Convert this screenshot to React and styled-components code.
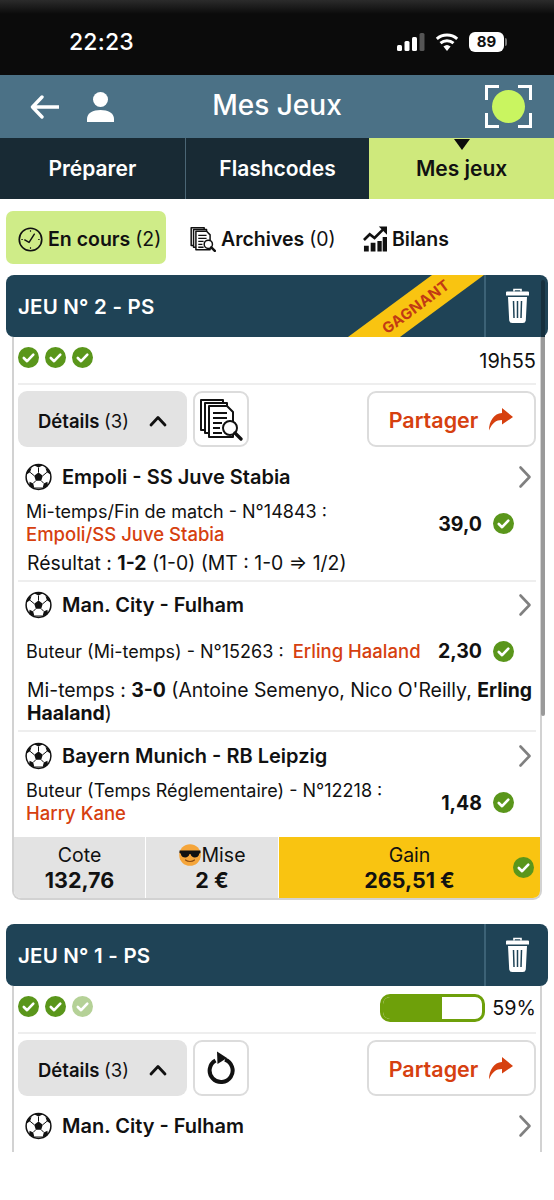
import React from 'react';
import styled, { createGlobalStyle } from 'styled-components';

const GlobalStyle = createGlobalStyle`
  html, body {
    margin: 0;
    padding: 0;
    background: #fff;
  }
  body {
    font-family: Inter, "Noto Sans", "Liberation Sans", sans-serif;
    color: #111;
  }
  * {
    box-sizing: border-box;
  }
`;

const Screen = styled.div`
  width: 554px;
  height: 1152px;
  overflow: hidden;
  position: relative;
  background: #fff;
`;

const StatusBar = styled.div`
  height: 75px;
  background: linear-gradient(#2b2b2b 0, #0b0b0b 14px);
  color: #fff;
  display: flex;
  align-items: center;
  justify-content: space-between;
  padding: 8px 50px 0 69px;
`;

const Clock = styled.span`
  font-size: 23px;
  font-weight: 500;
  letter-spacing: 0.2px;
`;

const StatusIcons = styled.div`
  display: flex;
  align-items: center;
  gap: 10px;
`;

const Battery = styled.div`
  width: 35px;
  height: 20px;
  border-radius: 6px;
  background: #fff;
  color: #111;
  font-size: 15px;
  font-weight: 700;
  display: flex;
  align-items: center;
  justify-content: center;
  position: relative;
  &::after {
    content: '';
    position: absolute;
    right: -3px;
    top: 6px;
    width: 2px;
    height: 8px;
    border-radius: 0 2px 2px 0;
    background: #777;
  }
`;

const Header = styled.header`
  height: 63px;
  background: #4b7186;
  display: grid;
  grid-template-columns: 1fr auto 1fr;
  align-items: center;
  padding: 0 22px;
  color: #fff;
`;

const HeaderLeft = styled.div`
  display: flex;
  align-items: center;
  gap: 28px;
  padding-left: 8px;
`;

const HeaderTitle = styled.h1`
  margin: 0 0 4px;
  font-size: 28px;
  font-weight: 500;
`;

const HeaderRight = styled.div`
  display: flex;
  justify-content: flex-end;
`;

const Tabs = styled.nav`
  height: 61px;
  display: grid;
  grid-template-columns: repeat(3, 1fr);
`;

const Tab = styled.div`
  position: relative;
  display: flex;
  align-items: center;
  justify-content: center;
  font-size: 21px;
  font-weight: 600;
  background: ${(p) => (p.$active ? '#cfe97c' : '#182a34')};
  color: ${(p) => (p.$active ? '#111' : '#fff')};
  border-left: ${(p) => (p.$divider ? '1px solid #4b6675' : 'none')};
  ${(p) =>
    p.$active &&
    `&::before {
      content: '';
      position: absolute;
      top: 1px;
      left: 50%;
      margin-left: -8px;
      border-left: 8px solid transparent;
      border-right: 8px solid transparent;
      border-top: 11px solid #0c0c0c;
    }`}
`;

const Filters = styled.div`
  display: flex;
  align-items: center;
  padding: 12px 6px 11px;
  height: 76px;
`;

const Filter = styled.div`
  height: 53px;
  display: flex;
  align-items: center;
  gap: 5px;
  font-size: 19.5px;
  font-weight: 600;
  white-space: nowrap;
  border-radius: 7px;
  padding-top: 3px;
  padding-left: ${(p) => p.$pad}px;
  width: ${(p) => p.$width}px;
  background: ${(p) => (p.$active ? '#cfec88' : 'transparent')};
`;

const Light = styled.span`
  font-weight: 400;
`;

const Card = styled.section`
  margin: 0 6px 24px;
`;

const CardHead = styled.div`
  position: relative;
  height: 62px;
  background: #1f4356;
  border-radius: 8px;
  color: #fff;
  display: flex;
  align-items: center;
  overflow: hidden;
`;

const CardTitle = styled.div`
  flex: 1;
  padding-left: 12px;
  font-size: 20.5px;
  font-weight: 600;
  letter-spacing: 0.2px;
`;

const TrashCell = styled.div`
  width: 64px;
  height: 100%;
  border-left: 2px solid #3c6276;
  display: flex;
  align-items: center;
  justify-content: center;
`;

const Ribbon = styled.div`
  position: absolute;
  left: 342px;
  top: 0;
  width: 136px;
  height: 62px;
  background: #f9c411;
  clip-path: polygon(0 100%, 84px 0, 136px 0, 52px 100%);
  display: flex;
  align-items: center;
  justify-content: center;
`;

const RibbonText = styled.span`
  color: #c23a14;
  font-size: 15px;
  font-weight: 700;
  letter-spacing: 0.4px;
  transform: rotate(-36.5deg);
`;

const Scrollbar = styled.div`
  position: absolute;
  left: 541px;
  top: 280px;
  width: 4px;
  height: 436px;
  border-radius: 2px;
  background: linear-gradient(#16303e 0, #16303e 57px, #9a9a9a 57px);
`;

const CardBody = styled.div`
  margin: 0 6px;
  padding: 0 4px ${(p) => (p.$cut ? '40px' : '0')};
  border: 2px solid #d2d2d2;
  border-top: none;
  border-radius: 0 0 9px 9px;
  overflow: hidden;
`;

const StatusRow = styled.div`
  height: 48px;
  display: flex;
  justify-content: space-between;
  align-items: center;
  border-bottom: 2px solid #eeeeee;
  padding-bottom: 2px;
`;

const Checks = styled.div`
  display: flex;
  gap: 6px;
  margin-top: -4px;
`;

const Time = styled.span`
  font-size: 20px;
  margin-top: 3px;
`;

const Progress = styled.div`
  display: flex;
  align-items: center;
  gap: 7px;
  font-size: 19.8px;
`;

const Track = styled.div`
  width: 105px;
  height: 28px;
  border: 3px solid #6ea00a;
  border-radius: 10px;
  background: #fff;
  overflow: hidden;
`;

const Fill = styled.div`
  height: 100%;
  background: #6ea00a;
`;

const Actions = styled.div`
  display: flex;
  gap: 6px;
  margin-top: 6px;
  height: 56px;
`;

const DetailsBtn = styled.div`
  width: 169px;
  background: #e3e3e3;
  border-radius: 9px;
  display: flex;
  align-items: center;
  justify-content: space-between;
  padding: 3px 20px 0;
  font-size: 18.5px;
  font-weight: 600;
`;

const IconBtn = styled.div`
  width: 56px;
  border: 2px solid #dcdcdc;
  border-radius: 9px;
  display: flex;
  align-items: center;
  justify-content: center;
`;

const ShareBtn = styled.div`
  margin-left: auto;
  width: 169px;
  border: 2px solid #dcdcdc;
  border-radius: 9px;
  display: flex;
  align-items: center;
  justify-content: center;
  gap: 10px;
  padding-top: 2px;
  color: #d6400f;
  font-size: 21.5px;
  font-weight: 600;
`;

const Match = styled.div`
  padding: ${(p) => (p.$first ? '16px' : p.$last ? '10px' : '9px')} 0 5px;
  border-bottom: ${(p) => (p.$last ? 'none' : '2px solid #eeeeee')};
`;

const MatchTitle = styled.div`
  height: 28px;
  display: flex;
  align-items: center;
  gap: 10px;
  padding-left: 7px;
  font-size: 20px;
  font-weight: 600;
`;

const Arrow = styled.svg`
  margin-left: auto;
  margin-right: 4px;
`;

const Bet = styled.div`
  min-height: 44px;
  margin-top: 10px;
  padding-left: 8px;
  display: flex;
  align-items: center;
  justify-content: space-between;
`;

const BetText = styled.div`
  font-size: 18px;
  line-height: 22px;
`;

const Pick = styled.span`
  color: #d6400f;
  font-size: 18.5px;
  font-weight: 500;
  margin-left: ${(p) => (p.$inline ? '4px' : '0')};
`;

const Odds = styled.div`
  display: flex;
  align-items: center;
  justify-content: flex-end;
  gap: 11px;
  padding-right: 22px;
  font-size: 19.5px;
  font-weight: 700;
  flex-shrink: 0;
`;

const Result = styled.div`
  margin-top: 6px;
  padding-left: 9px;
  font-size: 19.4px;
  line-height: 23px;
`;

const Strong = styled.strong`
  font-weight: 700;
`;

const Totals = styled.div`
  margin: 7px -4px 0;
  height: 61px;
  display: grid;
  grid-template-columns: 131px 132px 1fr;
  gap: 1px;
`;

const Total = styled.div`
  position: relative;
  display: flex;
  flex-direction: column;
  align-items: center;
  justify-content: center;
  background: ${(p) => (p.$gain ? '#f9c411' : '#e3e3e3')};
  font-size: 19.5px;
  line-height: 25px;
`;

const TotalLabel = styled.div`
  display: flex;
  align-items: center;
  gap: 1px;
`;

const TotalValue = styled.div`
  font-size: 21.5px;
  font-weight: 700;
`;

const GainCheck = styled.div`
  position: absolute;
  right: 6px;
  top: 20px;
  display: flex;
`;

const CheckIcon = ({ faded }) => (
  <svg width="21" height="21" viewBox="0 0 21 21" style={{ display: 'block', flexShrink: 0 }}>
    <circle cx="10.5" cy="10.5" r="10.5" fill={faded ? '#b5d197' : '#5a961b'} />
    <path d="M5.8 11l3.3 3.2 6.2-6.6" fill="none" stroke="#fff" strokeWidth="2.6" strokeLinecap="round" strokeLinejoin="round" />
  </svg>
);

const BallIcon = () => (
  <svg width="27" height="28" viewBox="0 0 27 28" style={{ flexShrink: 0 }}>
    <circle cx="13.5" cy="14" r="12.4" fill="#fff" stroke="#111" strokeWidth="1.5" />
    <path d="M13.5 9.6l4.3 3.1-1.6 5h-5.4l-1.6-5z" fill="#111" />
    <path d="M9.4 2.4l4.1 2.2 4.1-2.2-.6-.6h-7zM1.5 11.5l3.6-2.2 1.4-4.4-2.2 1.2-2.7 3.600zM25.500 11.500l-3.600-2.200-1.400-4.400 2.200 1.200 2.700 3.600zM4 23l.6-4.200 3.600 1.600 1.200 4.600-3-.6zM23 23l-.6-4.200-3.600 1.600-1.200 4.600 3-.6z" fill="#111" />
    <path d="M13.500 4.600v5M5.100 9.300l4.100 3.400M21.900 9.300l-4.100 3.400M8.200 20.400l2.600-2.700M18.800 20.400l-2.600-2.700M9.400 25h8.200" stroke="#111" strokeWidth="1" fill="none" />
  </svg>
);

const TrashIcon = () => (
  <svg width="23" height="36" viewBox="0 0 23 36">
    <path d="M8 3.500V1.500h7v2" fill="none" stroke="#fff" strokeWidth="1.600" />
    <path d="M1 3.500h21a1 1 0 0 1 1 1v3H0v-3a1 1 0 0 1 1-1z" fill="#fff" />
    <path d="M2 9h19l-1.200 23.500a3 3 0 0 1-3 2.500H6.200a3 3 0 0 1-3-2.500z" fill="#fff" />
    <path d="M7.500 13l.5 17M11.500 13v17M15.500 13l-.5 17" stroke="#1f4356" strokeWidth="1.500" fill="none" />
  </svg>
);

const DocSearchIcon = ({ size = 24, stroke = 1.4 }) => (
  <svg width={size} height={size} viewBox="0 0 44 44">
    <g fill="#fff" stroke="#111" strokeWidth={stroke * 1.8} strokeLinejoin="round">
      <path d="M2 3h22v30H2z" />
      <path d="M6 6h22v30H6z" />
      <path d="M10 9h18l6 6v25H10z" />
    </g>
    <path d="M14 16h14M14 21h14M14 26h9M14 31h7M14 36h9" stroke="#111" strokeWidth={stroke * 1.6} />
    <circle cx="31" cy="31" r="7" fill="#fff" stroke="#111" strokeWidth={stroke * 1.8} />
    <path d="M36 36l6 6" stroke="#111" strokeWidth={stroke * 3} strokeLinecap="round" />
  </svg>
);

const ClockIcon = () => (
  <svg width="25" height="25" viewBox="0 0 26 26" fill="none" stroke="#111">
    <circle cx="13" cy="13" r="11.700" strokeWidth="1.700" />
    <path d="M7 13.500l4.500 2.500 5.500-8.500" strokeWidth="1.500" strokeLinecap="round" strokeLinejoin="round" />
    <path d="M13 3.500v1.500M13 21v1.500M3.500 13H5M21 13h1.500" strokeWidth="1.200" />
  </svg>
);

const ChartIcon = () => (
  <svg width="24" height="27" viewBox="0 0 25 27">
    <path d="M1 26v-6h5v6zM8 26v-9h5v9zM15 26v-11h4.500v11zM20.500 26V11H25v15z" fill="#111" />
    <path d="M1 14l6-6 5 4 9-9" fill="none" stroke="#111" strokeWidth="2.800" />
    <path d="M16.500 0H25v8.500z" fill="#111" />
  </svg>
);

const ChevronRight = () => (
  <Arrow width="14" height="24" viewBox="0 0 14 24">
    <path d="M2.500 2.500L11.500 12l-9 9.500" fill="none" stroke="#808080" strokeWidth="2.600" strokeLinecap="round" strokeLinejoin="round" />
  </Arrow>
);

const ChevronUp = () => (
  <svg width="18" height="12" viewBox="0 0 18 12">
    <path d="M2 10l7-7.500 7 7.500" fill="none" stroke="#111" strokeWidth="2.800" strokeLinecap="round" strokeLinejoin="round" />
  </svg>
);

const RefreshIcon = () => (
  <svg width="28" height="34" viewBox="0 0 28 34">
    <path d="M8.500 9.500a11.500 11.500 0 1 0 9.500-.8" fill="none" stroke="#111" strokeWidth="4" />
    <path d="M10 0.500L20 7l-9.500 6z" fill="#111" />
  </svg>
);

const ShareIcon = () => (
  <svg width="26" height="24" viewBox="0 0 26 24">
    <path d="M14 0l11 9-11 7.500V12c-6 0-10 3-13 10.500C1 13 6 5.500 14 5z" fill="#d6400f" />
  </svg>
);

const CoolEmoji = () => (
  <svg width="22" height="22" viewBox="0 0 22 22">
    <circle cx="11" cy="11" r="10.800" fill="#f5a53a" />
    <path d="M0.500 6.500h21v2.500l-1.200 0.500c-.5 3-2.500 4-4.500 4s-3.800-1.500-4.300-3.500h-1c-.5 2-2.300 3.500-4.300 3.500s-4-1-4.500-4L0.500 9z" fill="#111" />
    <path d="M6.500 16c2.500 2 6.500 2 9 0" fill="none" stroke="#8a4a10" strokeWidth="1.200" strokeLinecap="round" />
  </svg>
);

const MatchBlock = ({ name, first, last, desc, pick, odds, inline, children }) => (
  <Match $first={first} $last={last}>
    <MatchTitle>
      <BallIcon />
      {name}
      <ChevronRight />
    </MatchTitle>
    {desc && (
      <Bet>
        <BetText>
          {desc} {!inline && <br />}
          <Pick $inline={inline}>{pick}</Pick>
        </BetText>
        <Odds>
          {odds}
          <CheckIcon />
        </Odds>
      </Bet>
    )}
    {children}
  </Match>
);

const CardActions = ({ icon }) => (
  <Actions>
    <DetailsBtn>
      <span>
        Détails <Light>(3)</Light>
      </span>
      <ChevronUp />
    </DetailsBtn>
    <IconBtn>{icon}</IconBtn>
    <ShareBtn>
      Partager
      <ShareIcon />
    </ShareBtn>
  </Actions>
);

const App = () => {
  const progress = 59;
  return (
    <Screen>
      <GlobalStyle />
      <StatusBar>
        <Clock>22:23</Clock>
        <StatusIcons>
          <svg width="28" height="18" viewBox="0 0 28 18">
            <rect x="0" y="12" width="5" height="6" rx="1.500" fill="#fff" />
            <rect x="7.500" y="8" width="5" height="10" rx="1.500" fill="#fff" />
            <rect x="15" y="4" width="5" height="14" rx="1.500" fill="#fff" />
            <rect x="22.500" y="0" width="5" height="18" rx="1.500" fill="#555" />
          </svg>
          <svg width="24" height="18" viewBox="0 0 24 18">
            <path d="M12 18l-3.600-4.400a5.500 5.500 0 0 1 7.200 0z" fill="#fff" />
            <path d="M5.500 10.200a10 10 0 0 1 13 0M1.800 5.800a15.600 15.600 0 0 1 20.400 0" fill="none" stroke="#fff" strokeWidth="3" />
          </svg>
          <Battery>89</Battery>
        </StatusIcons>
      </StatusBar>

      <Header>
        <HeaderLeft>
          <svg width="29" height="24" viewBox="0 0 29 24">
            <path d="M12 2L2.500 12l9.500 10M3 12h26" fill="none" stroke="#fff" strokeWidth="3.400" strokeLinecap="round" strokeLinejoin="round" />
          </svg>
          <svg width="27" height="30" viewBox="0 0 27 30">
            <circle cx="13.500" cy="7.500" r="7.500" fill="#fff" />
            <path d="M0 30v-3c0-6 6-9 13.500-9S27 21 27 27v3z" fill="#fff" />
          </svg>
        </HeaderLeft>
        <HeaderTitle>Mes Jeux</HeaderTitle>
        <HeaderRight>
          <svg width="47" height="43" viewBox="0 0 47 43">
            <path d="M1.500 15V1.500H14M33 1.500h12.500V15M1.500 28v13.500H14M33 41.500h12.500V28" fill="none" stroke="#fff" strokeWidth="3" />
            <circle cx="23.500" cy="21.500" r="16.500" fill="#c9f560" />
          </svg>
        </HeaderRight>
      </Header>

      <Tabs>
        <Tab>Préparer</Tab>
        <Tab $divider>Flashcodes</Tab>
        <Tab $active>Mes jeux</Tab>
      </Tabs>

      <Filters>
        <Filter $active $width={160} $pad={12}>
          <ClockIcon />
          <span>
            En cours <Light>(2)</Light>
          </span>
        </Filter>
        <Filter $width={173} $pad={24}>
          <DocSearchIcon size={26} />
          <span>
            Archives <Light>(0)</Light>
          </span>
        </Filter>
        <Filter $pad={24}>
          <ChartIcon />
          Bilans
        </Filter>
      </Filters>

      <Card>
        <CardHead>
          <CardTitle>JEU N° 2 - PS</CardTitle>
          <Ribbon>
            <RibbonText>GAGNANT</RibbonText>
          </Ribbon>
          <TrashCell>
            <TrashIcon />
          </TrashCell>
        </CardHead>
        <CardBody>
          <StatusRow>
            <Checks>
              <CheckIcon />
              <CheckIcon />
              <CheckIcon />
            </Checks>
            <Time>19h55</Time>
          </StatusRow>
          <CardActions icon={<DocSearchIcon size={44} stroke={1.1} />} />
          <MatchBlock
            first
            name="Empoli - SS Juve Stabia"
            desc="Mi-temps/Fin de match - N°14843 :"
            pick="Empoli/SS Juve Stabia"
            odds="39,0"
          >
            <Result>
              Résultat : <Strong>1-2</Strong> (1-0) (MT : 1-0 ⇒ 1/2)
            </Result>
          </MatchBlock>
          <MatchBlock
            name="Man. City - Fulham"
            desc="Buteur (Mi-temps) - N°15263 :"
            pick="Erling Haaland"
            odds="2,30"
            inline
          >
            <Result>
              Mi-temps : <Strong>3-0</Strong> (Antoine Semenyo, Nico O'Reilly, <Strong>Erling Haaland</Strong>)
            </Result>
          </MatchBlock>
          <MatchBlock
            last
            name="Bayern Munich - RB Leipzig"
            desc="Buteur (Temps Réglementaire) - N°12218 :"
            pick="Harry Kane"
            odds="1,48"
          />
          <Totals>
            <Total>
              <TotalLabel>Cote</TotalLabel>
              <TotalValue>132,76</TotalValue>
            </Total>
            <Total>
              <TotalLabel>
                <CoolEmoji />
                Mise
              </TotalLabel>
              <TotalValue>2 €</TotalValue>
            </Total>
            <Total $gain>
              <TotalLabel>Gain</TotalLabel>
              <TotalValue>265,51 €</TotalValue>
              <GainCheck>
                <CheckIcon />
              </GainCheck>
            </Total>
          </Totals>
        </CardBody>
      </Card>

      <Card>
        <CardHead>
          <CardTitle>JEU N° 1 - PS</CardTitle>
          <TrashCell>
            <TrashIcon />
          </TrashCell>
        </CardHead>
        <CardBody $cut>
          <StatusRow>
            <Checks>
              <CheckIcon />
              <CheckIcon />
              <CheckIcon faded />
            </Checks>
            <Progress>
              <Track>
                <Fill style={{ width: `${progress}%` }} />
              </Track>
              {progress}%
            </Progress>
          </StatusRow>
          <CardActions icon={<RefreshIcon />} />
          <MatchBlock first last name="Man. City - Fulham" />
        </CardBody>
      </Card>

      <Scrollbar />
    </Screen>
  );
};

export default App;
